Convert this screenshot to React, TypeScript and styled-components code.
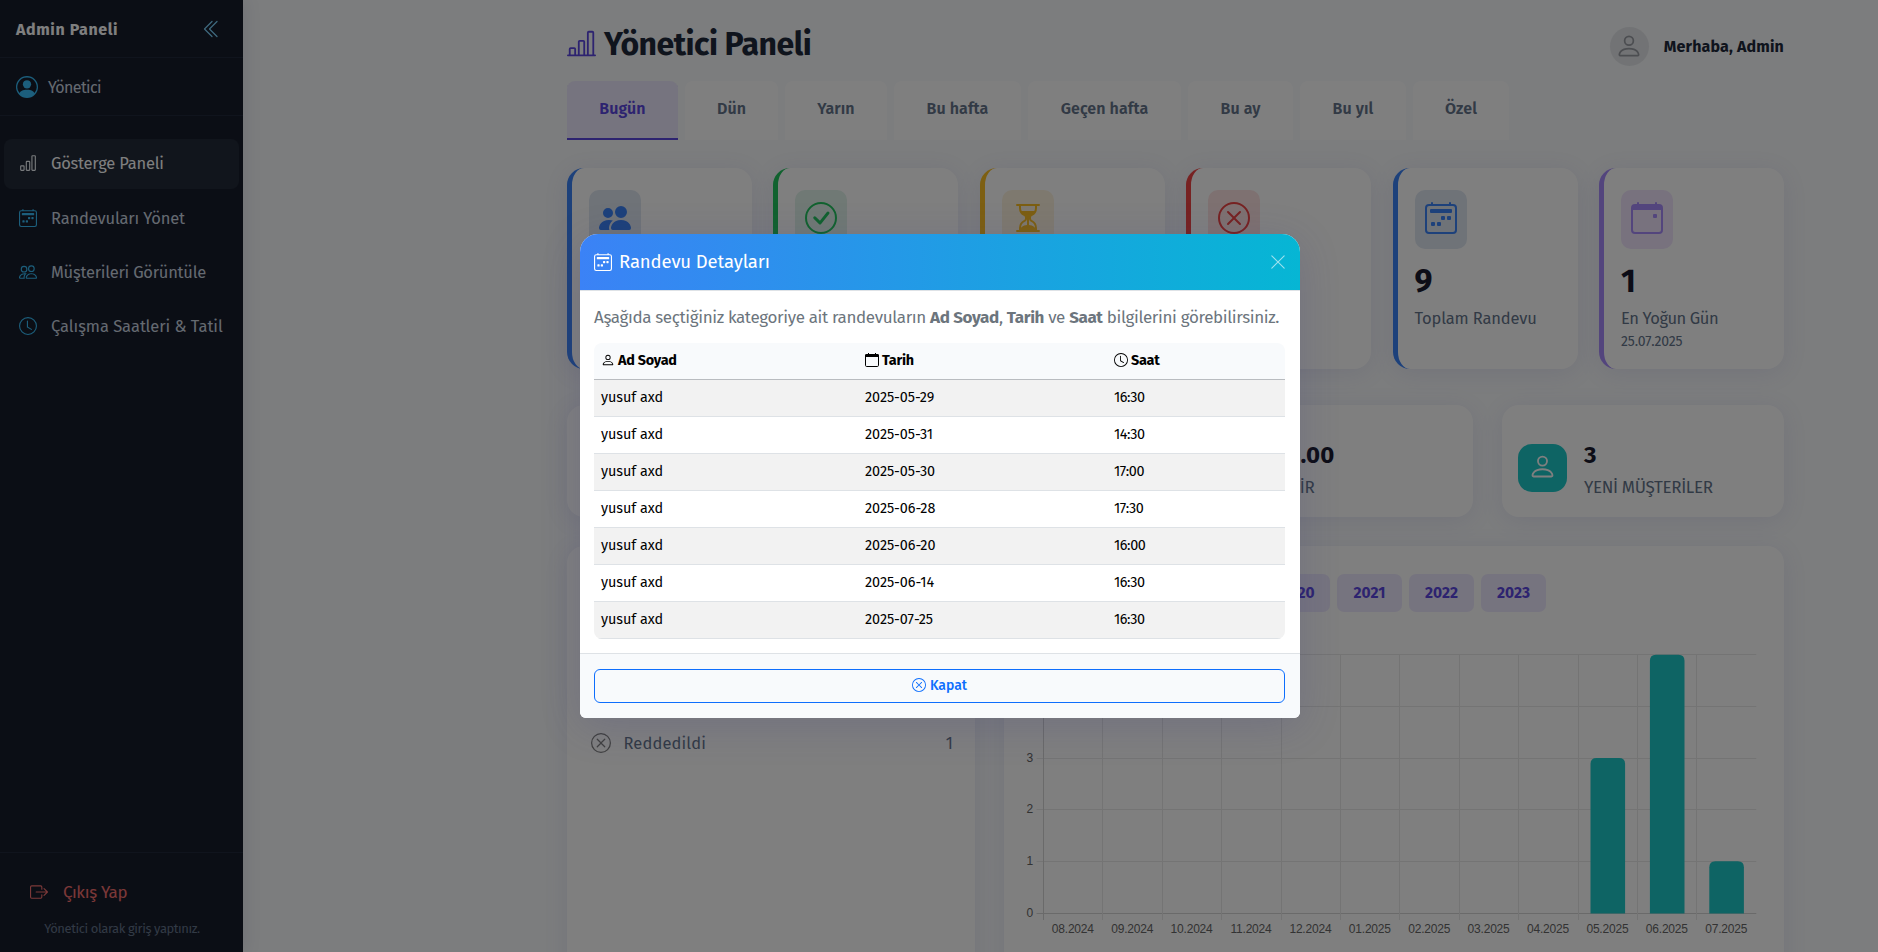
import React from "react";
import styled, { createGlobalStyle, css } from "styled-components";
import {
  BsBarChart, BsBarChartLine, BsCalendar2Week, BsPeople, BsClock, BsBoxArrowRight,
  BsPersonCircle, BsChevronDoubleLeft, BsPeopleFill, BsCheckCircle, BsHourglassSplit,
  BsXCircle, BsCalendarEvent, BsPerson, BsXLg,
} from "react-icons/bs";

const Global = createGlobalStyle`
  * { box-sizing: border-box; }
  html, body { margin: 0; height: 100%; overflow: hidden; }
  body { font-family: "Fira Sans", "Noto Sans", sans-serif; background: #f8fafc; color: #1e293b; }
  svg { display: block; flex: none; }
`;

const Page = styled.div`
  display: flex;
  width: 1878px;
  height: 952px;
  overflow: hidden;
  position: relative;
  background: #f8fafc;
`;

/* Sidebar */
const Sidebar = styled.aside`
  width: 243px;
  height: 952px;
  flex: none;
  display: flex;
  flex-direction: column;
  background: #171d2b;
  color: #cbd5e1;
  box-shadow: 2px 0 16px rgba(30, 41, 100, 0.1);
`;
const SideHead = styled.div`
  height: 58px;
  padding: 1px 21px 0 16px;
  display: flex;
  align-items: center;
  justify-content: space-between;
  border-bottom: 1px solid #20283a;
  color: #fff;
  font-size: 16px;
  font-weight: 700;
  letter-spacing: 0.6px;
`;
const SideUser = styled.div`
  height: 58px;
  padding: 1px 16px 0;
  display: flex;
  align-items: center;
  gap: 10px;
  border-bottom: 1px solid #20283a;
  font-size: 16px;
  letter-spacing: -0.6px;
`;
const Nav = styled.nav`
  flex: 1;
  padding: 23px 4px 0;
  display: flex;
  flex-direction: column;
  gap: 4px;
`;
const NavItem = styled.a<{ $active?: boolean; $ls: number }>`
  height: 50px;
  padding: 0 15px ${(p) => (p.$active ? 2 : 0)}px;
  display: flex;
  align-items: center;
  gap: 14px;
  border-radius: 8px;
  font-size: 16.5px;
  white-space: nowrap;
  letter-spacing: ${(p) => p.$ls}px;
  color: ${(p) => (p.$active ? "#fff" : "#cbd5e1")};
  background: ${(p) => (p.$active ? "#222a38" : "transparent")};
  svg { color: ${(p) => (p.$active ? "#f1f5f9" : "#38bdf8")}; }
`;
const SideFoot = styled.div`
  height: 100px;
  border-top: 1px solid #20283a;
  display: flex;
  flex-direction: column;
  align-items: center;
`;
const Logout = styled.div`
  align-self: stretch;
  display: flex;
  align-items: center;
  gap: 15px;
  height: 50px;
  margin-top: 14px;
  padding-left: 30px;
  color: #f87171;
  font-size: 17px;
  letter-spacing: -0.35px;
`;
const SideNote = styled.div`
  font-size: 13px;
  line-height: 20px;
  margin-top: 2px;
  margin-left: 1px;
  letter-spacing: -0.42px;
  color: #64748b;
`;

/* Main area */
const Main = styled.main`
  flex: 1;
  padding: 0 94px 0 324px;
  display: flex;
  flex-direction: column;
  & > * { flex: none; }
`;
const TopBar = styled.header`
  height: 81px;
  display: flex;
  justify-content: space-between;
  align-items: flex-start;
`;
const Title = styled.h1`
  margin: 23px 0 0;
  display: flex;
  align-items: center;
  gap: 8px;
  font-size: 32px;
  line-height: 43px;
  font-weight: 700;
  letter-spacing: -0.5px;
  color: #1e293b;
  svg { color: #5b47e0; margin-bottom: 3px; }
`;
const Greeting = styled.div`
  margin-top: 27px;
  display: flex;
  align-items: center;
  gap: 15px;
  font-size: 16px;
  font-weight: 700;
  letter-spacing: 0.16px;
`;
const Avatar = styled.span`
  width: 39px;
  height: 39px;
  border-radius: 50%;
  background: #e5e7eb;
  color: #999ca3;
  padding-bottom: 2px;
  display: grid;
  place-items: center;
`;
const Tabs = styled.div`
  display: flex;
  gap: 7px;
  height: 59px;
`;
const Tab = styled.div<{ $w: number; $active?: boolean }>`
  width: ${(p) => p.$w}px;
  flex: none;
  text-align: center;
  font-size: 16px;
  line-height: 56px;
  font-weight: 600;
  letter-spacing: 0.08px;
  border-radius: 8px 8px 0 0;
  color: ${(p) => (p.$active ? "#5b47e0" : "#64748b")};
  background: ${(p) => (p.$active ? "#ede9fe" : "#fff")};
  box-shadow: ${(p) => (p.$active ? "inset 0 -2px #5b47e0" : "none")};
`;
const shadow = css`box-shadow: 0 4px 24px rgba(79, 70, 180, 0.1);`;
const StatRow = styled.section`
  display: grid;
  grid-template-columns: repeat(6, 185px);
  justify-content: space-between;
  margin-top: 28px;
`;
const StatCard = styled.article<{ $c: string }>`
  height: 201px;
  padding: 22px 17px;
  border-radius: 17px;
  border-left: 5px solid ${(p) => p.$c};
  background: #fff;
  ${shadow}
`;
const StatIcon = styled.div<{ $c: string; $bg: string }>`
  width: 52px;
  height: 59px;
  padding-bottom: 3px;
  border-radius: 10px;
  display: grid;
  place-items: center;
  color: ${(p) => p.$c};
  background: ${(p) => p.$bg};
`;
const StatValue = styled.div`
  font-size: 32px;
  line-height: 40px;
  margin-top: 12px;
  font-weight: 700;
  color: #1a1a2e;
`;
const StatLabel = styled.div<{ $ls: number }>`
  font-size: 16.5px;
  line-height: 24px;
  margin-top: 6px;
  color: #64748b;
  letter-spacing: ${(p) => p.$ls}px;
  white-space: nowrap;
`;
const StatDate = styled.div`
  font-size: 14px;
  line-height: 21px;
  color: #64748b;
  letter-spacing: -0.12px;
`;
const KpiRow = styled.section`
  display: grid;
  grid-template-columns: repeat(4, 1fr);
  gap: 29px;
  margin-top: 36px;
`;
const Kpi = styled.article`
  height: 112px;
  padding: 0 16.5px;
  border-radius: 17px;
  background: #fff;
  display: flex;
  align-items: center;
  gap: 17px;
  ${shadow}
`;
const KpiIcon = styled.div`
  width: 49px;
  height: 48px;
  margin-top: 14px;
  border-radius: 14px;
  padding-bottom: 3px;
  background: #1dc8c8;
  color: #fff;
  display: grid;
  place-items: center;
`;
const KpiValue = styled.div`
  margin-top: 20px;
  font-size: 24px;
  line-height: 32px;
  font-weight: 700;
  letter-spacing: 0.15px;
  color: #1a1a2e;
`;
const KpiLabel = styled.div`
  font-size: 17px;
  line-height: 32px;
  padding-top: 1px;
  margin-bottom: -1px;
  color: #64748b;
  letter-spacing: -0.35px;
`;
const Panels = styled.section`
  display: flex;
  gap: 29px;
  margin-top: 29px;
  height: 460px;
`;
const Panel = styled.article<{ $w: number }>`
  width: ${(p) => p.$w}px;
  flex: none;
  background: #fff;
  border-radius: 17px;
  ${shadow}
`;
const StatusLine = styled.div`
  display: flex;
  align-items: center;
  gap: 13px;
  margin: 181px 22px 0 23.5px;
  height: 32px;
  font-size: 16.5px;
  letter-spacing: 0.12px;
  color: #64748b;
  svg { color: #808080; }
  b { margin-left: auto; font-weight: 400; }
`;
const Years = styled.div`
  display: flex;
  gap: 7px;
  padding: 28px 0 0 261px;
`;
const Year = styled.span`
  width: 65px;
  height: 38px;
  border-radius: 7px;
  background: #ede9fe;
  color: #5b47e0;
  font-size: 15.5px;
  line-height: 38px;
  font-weight: 700;
  text-align: center;
`;
const ChartSvg = styled.svg`
  margin: 34px 0 0;
  text { font: 12px "Liberation Sans", Arial, sans-serif; letter-spacing: -0.2px; fill: #666; }
`;

/* Dialog */
const Backdrop = styled.div`
  position: absolute;
  inset: 0;
  background: rgba(0, 0, 0, 0.5);
  display: flex;
  justify-content: center;
  align-items: flex-start;
  padding: 234px 0 0 2px;
`;
const Modal = styled.div`
  width: 720px;
  height: 484px;
  border-radius: 18px 18px 6px 6px;
  overflow: hidden;
  background: #fff;
  box-shadow: 0 8px 40px rgba(60, 60, 130, 0.2);
  display: flex;
  flex-direction: column;
`;
const ModalHead = styled.div`
  height: 57px;
  padding: 0 13px 0 14px;
  display: flex;
  align-items: center;
  gap: 7px;
  color: #fff;
  background: linear-gradient(90deg, #3b82f6, #06b6d4);
  border-bottom: 1px solid #dee2e6;
  font-size: 18.5px;
  letter-spacing: -0.12px;
`;
const CloseIcon = styled(BsXLg)`
  margin-left: auto;
  opacity: 0.6;
`;
const ModalBody = styled.div`
  flex: 1;
  padding: 13px 15px 0 14px;
`;
const Intro = styled.p`
  margin: 0;
  height: 39px;
  line-height: 28px;
  font-size: 17px;
  letter-spacing: -0.36px;
  color: #6c757d;
  white-space: nowrap;
  b { font-weight: 700; }
`;
const Table = styled.div`
  border-radius: 8px;
  overflow: hidden;
  color: #000;
  font-size: 14.4px;
`;
const HeadRow = styled.div`
  display: grid;
  grid-template-columns: 264px 249px 1fr;
  height: 37px;
  padding-left: 7px;
  background: #f8fafc;
  border-bottom: 1px solid #b9bcc0;
  font-weight: 700;
`;
const HeadCell = styled.div`
  display: flex;
  align-items: center;
  gap: 3px;
  padding-bottom: 2px;
  letter-spacing: -0.25px;
`;
const Row = styled.div`
  display: grid;
  grid-template-columns: 264px 249px 1fr;
  height: 37px;
  line-height: 35px;
  padding-left: 7px;
  border-bottom: 1px solid #dee2e6;
  &:nth-child(even) { background: #f2f2f2; }
`;
const Cell = styled.div<{ $ls: number }>`
  letter-spacing: ${(p) => p.$ls}px;
`;
const ModalFoot = styled.div`
  height: 65px;
  padding: 15px 15px 0 14px;
  border-top: 1px solid #dee2e6;
  background: #f8fafc;
`;
const CloseButton = styled.button`
  width: 100%;
  height: 34px;
  display: flex;
  align-items: center;
  justify-content: center;
  gap: 4px;
  padding: 0 0 2px;
  border: 1px solid #0d6efd;
  border-radius: 6px;
  background: transparent;
  color: #0d6efd;
  font: 500 14px "Fira Sans", "Noto Sans", sans-serif;
`;

const tabs: [string, number][] = [
  ["Bugün", 111], ["Dün", 93], ["Yarın", 102], ["Bu hafta", 127],
  ["Geçen hafta", 153], ["Bu ay", 105], ["Bu yıl", 106], ["Özel", 96],
];
const stats = [
  { c: "#3b82f6", bg: "#dee6f1", icon: BsPeopleFill },
  { c: "#22c55e", bg: "#e0f2ea", icon: BsCheckCircle },
  { c: "#fbbf24", bg: "#fdf3df", icon: BsHourglassSplit },
  { c: "#ef4444", bg: "#fde2e2", icon: BsXCircle },
  { c: "#3b82f6", bg: "#dee6f1", icon: BsCalendar2Week, value: "9", label: "Toplam Randevu", ls: -0.15 },
  { c: "#a78bfa", bg: "#f0e4fc", icon: BsCalendarEvent, value: "1", label: "En Yoğun Gün", ls: -0.4, date: "25.07.2025" },
];
const rows = [
  ["2025-05-29", "16:30"], ["2025-05-31", "14:30"], ["2025-05-30", "17:00"], ["2025-06-28", "17:30"],
  ["2025-06-20", "16:00"], ["2025-06-14", "16:30"], ["2025-07-25", "16:30"],
];
const months = [
  ["08.2024", 0], ["09.2024", 0], ["10.2024", 0], ["11.2024", 0], ["12.2024", 0], ["01.2025", 0],
  ["02.2025", 0], ["03.2025", 0], ["04.2025", 0], ["05.2025", 3], ["06.2025", 5], ["07.2025", 1],
] as [string, number][];

function CalendarIcon() {
  return (
    <svg width="14" height="14" viewBox="0 0 14 14" fill="none">
      <rect x="0.5" y="1.5" width="13" height="12" rx="1.2" stroke="currentColor" />
      <path d="M1 1h2V0h1v1h6V0h1v1h2l1 1v2H0V2z" fill="currentColor" />
    </svg>
  );
}

function Chart() {
  const x0 = 39.5, step = 59.4, base = 267, unit = 51.65, right = x0 + step * 12;
  return (
    <ChartSvg width="780" height="300">
      {[0, 1, 2, 3, 4, 5].map((v) => {
        const y = Math.floor(base - v * unit) + 0.5;
        return (
          <g key={v}>
            <line x1={x0 - 7} x2={right} y1={y} y2={y} stroke={v ? "#e8e8e8" : "#d4d4d4"} />
            <text x={x0 - 10.5} y={y + 3.5} textAnchor="end">{v}</text>
          </g>
        );
      })}
      {Array.from({ length: 12 }, (_, i) => {
        const x = Math.floor(x0 + i * step) + 0.5;
        return <line key={i} x1={x} x2={x} y1={base - 5 * unit} y2={base + 7} stroke={i ? "#e8e8e8" : "#d4d4d4"} />;
      })}
      {months.map(([m, v], i) => {
        const cx = x0 + (i + 0.5) * step;
        const top = base - v * unit;
        return (
          <g key={m}>
            {v > 0 && (
              <path
                fill="#1dc8c8"
                d={`M${cx - 17.3} ${base + 0.5}V${top + 6}q0-6 6-6h22.6q6 0 6 6V${base + 0.5}z`}
              />
            )}
            <text x={cx - 0.4} y={base + 20} textAnchor="middle">{m}</text>
          </g>
        );
      })}
    </ChartSvg>
  );
}

export default function App() {
  return (
    <>
      <Global />
      <Page>
        <Sidebar>
          <SideHead>Admin Paneli<BsChevronDoubleLeft size={20} color="#7dd3fc" /></SideHead>
          <SideUser><BsPersonCircle size={22} color="#38bdf8" />Yönetici</SideUser>
          <Nav>
            <NavItem $active $ls={-0.22}><BsBarChart size={18} />Gösterge Paneli</NavItem>
            <NavItem $ls={-0.15}><BsCalendar2Week size={18} />Randevuları Yönet</NavItem>
            <NavItem $ls={-0.24}><BsPeople size={18} />Müşterileri Görüntüle</NavItem>
            <NavItem $ls={-0.05}><BsClock size={18} />Çalışma Saatleri &amp; Tatil</NavItem>
          </Nav>
          <SideFoot>
            <Logout><BsBoxArrowRight size={18} />Çıkış Yap</Logout>
            <SideNote>Yönetici olarak giriş yaptınız.</SideNote>
          </SideFoot>
        </Sidebar>
        <Main>
          <TopBar>
            <Title><BsBarChartLine size={29} />Yönetici Paneli</Title>
            <Greeting><Avatar><BsPerson size={28} /></Avatar>Merhaba, Admin</Greeting>
          </TopBar>
          <Tabs>
            {tabs.map(([t, w], i) => <Tab key={t} $w={w} $active={i === 0}>{t}</Tab>)}
          </Tabs>
          <StatRow>
            {stats.map((s, i) => (
              <StatCard key={i} $c={s.c}>
                <StatIcon $c={s.c} $bg={s.bg}><s.icon size={32} /></StatIcon>
                {s.value && <StatValue>{s.value}</StatValue>}
                {s.label && <StatLabel $ls={s.ls ?? 0}>{s.label}</StatLabel>}
                {s.date && <StatDate>{s.date}</StatDate>}
              </StatCard>
            ))}
          </StatRow>
          <KpiRow>
            <Kpi />
            <Kpi />
            <Kpi>
              <KpiIcon />
              <div><KpiValue>₺0.00</KpiValue><KpiLabel>GELİR</KpiLabel></div>
            </Kpi>
            <Kpi>
              <KpiIcon><BsPerson size={29} /></KpiIcon>
              <div><KpiValue>3</KpiValue><KpiLabel>YENİ MÜŞTERİLER</KpiLabel></div>
            </Kpi>
          </KpiRow>
          <Panels>
            <Panel $w={408}>
              <StatusLine><BsXCircle size={20} />Reddedildi<b>1</b></StatusLine>
            </Panel>
            <Panel $w={780}>
              <Years>{["2020", "2021", "2022", "2023"].map((y) => <Year key={y}>{y}</Year>)}</Years>
              <Chart />
            </Panel>
          </Panels>
        </Main>
        <Backdrop>
          <Modal role="dialog">
            <ModalHead><BsCalendar2Week size={18} />Randevu Detayları<CloseIcon size={18} /></ModalHead>
            <ModalBody>
              <Intro>
                Aşağıda seçtiğiniz kategoriye ait randevuların <b>Ad Soyad</b>, <b>Tarih</b> ve <b>Saat</b> bilgilerini görebilirsiniz.
              </Intro>
              <Table>
                <HeadRow>
                  <HeadCell><BsPerson size={14} />Ad Soyad</HeadCell>
                  <HeadCell><CalendarIcon />Tarih</HeadCell>
                  <HeadCell><BsClock size={14} />Saat</HeadCell>
                </HeadRow>
                {rows.map(([d, t]) => (
                  <Row key={d}>
                    <Cell $ls={-0.05}>yusuf axd</Cell>
                    <Cell $ls={-0.05}>{d}</Cell>
                    <Cell $ls={-0.4}>{t}</Cell>
                  </Row>
                ))}
              </Table>
            </ModalBody>
            <ModalFoot><CloseButton><BsXCircle size={14} />Kapat</CloseButton></ModalFoot>
          </Modal>
        </Backdrop>
      </Page>
    </>
  );
}
